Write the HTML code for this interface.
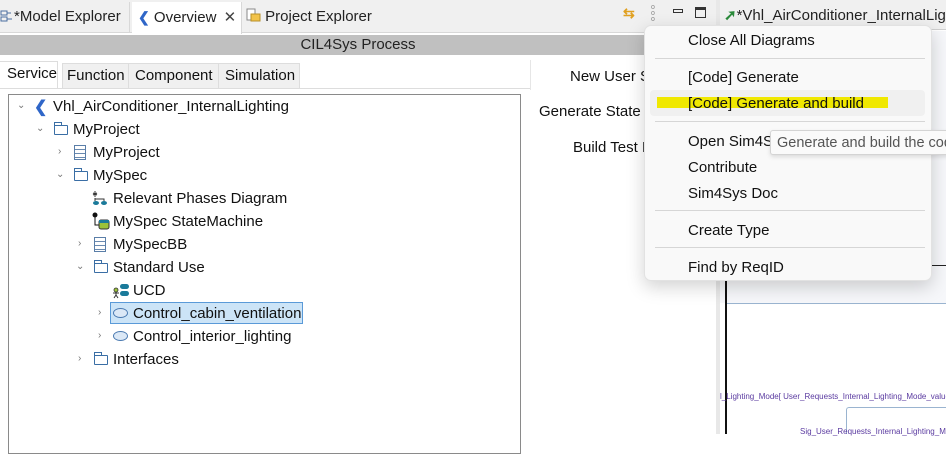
<!DOCTYPE html>
<html><head><meta charset="utf-8">
<style>
*{margin:0;padding:0;box-sizing:border-box}
body{width:946px;height:434px;overflow:hidden;background:#fff;font-family:"Liberation Sans",sans-serif;font-size:14px;color:#111;position:relative}
.a{position:absolute;white-space:nowrap}
.tabbar{left:0;top:0;width:716px;height:33px;background:#f0f0f0;border-bottom:1px solid #d8d8d8}
.tab{top:2px;height:31px;line-height:30px;font-size:15px;color:#222}
.chev{font-size:10px;color:#777}
.fold{width:14px;height:10px;border:1.3px solid #3a6ea5;border-radius:1px;background:#fff}
.fold:before{content:"";position:absolute;left:-1px;top:-4px;width:6px;height:3px;border:1.3px solid #3a6ea5;border-bottom:none}
.bb{width:12px;height:15px;border:1.3px solid #5a7ea8;background:repeating-linear-gradient(#fff 0 3px,#6a8ab0 3px 4px)}
.ell{width:15px;height:10px;border:1.2px solid #4a79b0;border-radius:50%;background:#dbe8f6}
.ti{font-size:15px;color:#111}
.mi{left:688px;font-size:15px;color:#111}
.sep{left:655px;width:270px;height:1px;background:#d6d6d6}
</style></head><body>
<div class="a tabbar"></div>
<div class="a" style="left:0;top:2px;width:130px;height:31px;border-right:1px solid #d8d8d8"></div>
<div class="a tab" style="left:0;">
 <svg width="14" height="14" style="vertical-align:-2px"><rect x="1" y="2" width="6" height="4" fill="none" stroke="#4a6ea0"/><rect x="1" y="8" width="6" height="4" fill="none" stroke="#4a6ea0"/><path d="M7 4h4M7 10h5" stroke="#4a6ea0"/></svg>*Model Explorer</div>
<div class="a" style="left:132px;top:2px;width:110px;height:32px;background:#fff;border-right:1px solid #d8d8d8"></div>
<div class="a tab" style="left:138px;"><span style="color:#2f66c8;font-weight:bold;font-size:14px">❮</span> Overview <span style="color:#444;margin-left:3px">✕</span></div>
<div class="a tab" style="left:246px;"><svg width="15" height="15" style="vertical-align:-2px"><rect x="1" y="1" width="8" height="11" fill="#fff" stroke="#888"/><rect x="5" y="6" width="9" height="7" fill="#f2c34a" stroke="#b8902a"/></svg> Project Explorer</div>
<div class="a" style="left:623px;top:5px;color:#e0a020;font-size:14px;font-weight:bold">⇆</div>
<div class="a" style="left:651px;top:5px;width:5px;font-size:7px;line-height:6px;color:#888">o<br>o<br>o</div>
<div class="a" style="left:673px;top:9px;width:10px;height:4px;border:1.3px solid #333"></div>
<div class="a" style="left:695px;top:7px;width:11px;height:11px;border:1.3px solid #333;border-top-width:3px"></div>
<!-- right editor -->
<div class="a" style="left:716px;top:0;width:230px;height:434px;background:#fff"></div>
<div class="a" style="left:716px;top:0;width:4px;height:434px;background:#e8e8e8"></div>
<div class="a" style="left:720px;top:0;width:226px;height:30px;background:#f0f0f0;border-bottom:1px solid #d0d0d0"></div>
<div class="a tab" style="left:724px;top:1px"><span style="color:#2a8a3a;font-weight:bold">➚</span>*Vhl_AirConditioner_InternalLighting</div>
<div class="a" style="left:720px;top:31px;width:226px;height:272px;background:#f6f7fa"></div>
<div class="a" style="left:725px;top:280px;width:2px;height:154px;background:#111"></div>
<div class="a" style="left:727px;top:303px;width:219px;height:1px;background:#9ab4d0"></div>
<div class="a" style="left:930px;top:265px;width:16px;height:1px;background:#222"></div>
<div class="a" style="left:720px;top:392px;font-size:8px;color:#5a3aa0">l_Lighting_Mode[ User_Requests_Internal_Lighting_Mode_value == Inter</div>
<div class="a" style="left:846px;top:407px;width:100px;height:27px;border:1px solid #9ab4d0;border-right:none;border-bottom:none;border-radius:3px 0 0 0"></div>
<div class="a" style="left:800px;top:427px;font-size:8px;color:#5a3aa0">Sig_User_Requests_Internal_Lighting_Mode[ Us</div>
<!-- header -->
<div class="a" style="left:0;top:35px;width:716px;height:20px;background:#c0c0c0;text-align:center;line-height:20px;font-size:15px;color:#222">CIL4Sys Process</div>
<!-- subtabs -->
<div class="a" style="left:0;top:61px;width:58px;height:28px;background:#fff;border-top:1px solid #ddd;border-right:1px solid #ddd"></div>
<div class="a" style="left:62px;top:63px;width:238px;height:26px;background:#f0f0f0;border:1px solid #ddd"></div>
<div class="a" style="left:128px;top:63px;width:1px;height:26px;background:#ddd"></div>
<div class="a" style="left:218px;top:63px;width:1px;height:26px;background:#ddd"></div>
<div class="a" style="left:0;top:88px;width:530px;height:346px;border-top:1px solid #ddd"></div>
<div class="a" style="left:530px;top:60px;width:1px;height:30px;background:#e6e6e6"></div>
<div class="a ti" style="left:7px;top:65px">Service</div>
<div class="a ti" style="left:67px;top:67px">Function</div>
<div class="a ti" style="left:135px;top:67px">Component</div>
<div class="a ti" style="left:225px;top:67px">Simulation</div>
<!-- tree -->
<div class="a" style="left:8px;top:94px;width:513px;height:360px;border:1px solid #8a8a8a"></div>
<div class="a chev" style="left:17px;top:100px">⌄</div>
<div class="a" style="left:34px;top:97px;color:#2f66c8;font-weight:bold;font-size:16px">❮</div>
<div class="a ti" style="left:53px;top:98px">Vhl_AirConditioner_InternalLighting</div>
<div class="a chev" style="left:36px;top:123px">⌄</div><div class="a fold" style="left:54px;top:125px"></div><div class="a ti" style="left:73px;top:121px">MyProject</div>
<div class="a chev" style="left:58px;top:146px">›</div><div class="a bb" style="left:74px;top:145px"></div><div class="a ti" style="left:93px;top:144px">MyProject</div>
<div class="a chev" style="left:56px;top:169px">⌄</div><div class="a fold" style="left:74px;top:171px"></div><div class="a ti" style="left:93px;top:167px">MySpec</div>
<svg class="a" style="left:92px;top:190px" width="16" height="16"><path d="M3 1v6M1 3l4 2M5 3l-4 2" stroke="#333"/><path d="M3 8v3M3 9h9v2" stroke="#333" fill="none"/><ellipse cx="4" cy="13" rx="3" ry="2" fill="#1a7a9a"/><ellipse cx="12" cy="13" rx="3" ry="2" fill="#1a7a9a"/></svg>
<div class="a ti" style="left:113px;top:190px">Relevant Phases Diagram</div>
<svg class="a" style="left:92px;top:212px" width="18" height="18"><circle cx="3" cy="3" r="2.5" fill="#111"/><path d="M3 5v8h4" stroke="#111" fill="none"/><rect x="7" y="8" width="10" height="9" rx="2" fill="#9bc23a" stroke="#333"/><rect x="7" y="8" width="10" height="3" fill="#1a7a9a"/></svg>
<div class="a ti" style="left:113px;top:213px">MySpec StateMachine</div>
<div class="a chev" style="left:78px;top:238px">›</div><div class="a bb" style="left:94px;top:237px"></div><div class="a ti" style="left:113px;top:236px">MySpecBB</div>
<div class="a chev" style="left:76px;top:261px">⌄</div><div class="a fold" style="left:94px;top:263px"></div><div class="a ti" style="left:113px;top:259px">Standard Use</div>
<svg class="a" style="left:112px;top:282px" width="18" height="18"><circle cx="4" cy="8" r="2" fill="#9bc23a" stroke="#333" stroke-width=".8"/><path d="M4 10v3M1 11h6M4 13l-2 3M4 13l2 3" stroke="#333"/><rect x="8" y="2" width="9" height="5" rx="2.5" fill="#1a7a9a"/><rect x="8" y="9" width="9" height="5" rx="2.5" fill="#1a7a9a"/></svg>
<div class="a ti" style="left:133px;top:282px">UCD</div>
<div class="a" style="left:110px;top:302px;width:193px;height:22px;background:#cce4f7;border:1px solid #5a9ad8"></div>
<div class="a chev" style="left:98px;top:307px">›</div><div class="a ell" style="left:113px;top:308px"></div><div class="a ti" style="left:133px;top:305px">Control_cabin_ventilation</div>
<div class="a chev" style="left:98px;top:330px">›</div><div class="a ell" style="left:113px;top:331px"></div><div class="a ti" style="left:133px;top:328px">Control_interior_lighting</div>
<div class="a chev" style="left:78px;top:353px">›</div><div class="a fold" style="left:94px;top:355px"></div><div class="a ti" style="left:113px;top:351px">Interfaces</div>
<!-- middle labels -->
<div class="a ti" style="left:570px;top:68px">New User S</div>
<div class="a ti" style="left:539px;top:103px">Generate State I</div>
<div class="a ti" style="left:573px;top:139px">Build Test I</div>
<!-- menu -->
<div class="a" style="left:644px;top:25px;width:288px;height:256px;background:#f9f9f9;border:1px solid #e2e2e2;border-radius:7px;box-shadow:0 6px 18px rgba(0,0,0,.18)"></div>
<div class="a mi" style="top:32px">Close All Diagrams</div>
<div class="a sep" style="top:58px"></div>
<div class="a mi" style="top:69px">[Code] Generate</div>
<div class="a" style="left:650px;top:90px;width:275px;height:26px;background:#f0f0f0;border-radius:4px"></div>
<div class="a" style="left:657px;top:97px;width:231px;height:11px;background:#f0e800"></div>
<div class="a mi" style="top:95px">[Code] Generate and build</div>
<div class="a sep" style="top:121px"></div>
<div class="a mi" style="top:133px">Open Sim4Sys</div>
<div class="a mi" style="top:159px">Contribute</div>
<div class="a mi" style="top:185px">Sim4Sys Doc</div>
<div class="a sep" style="top:210px"></div>
<div class="a mi" style="top:222px">Create Type</div>
<div class="a sep" style="top:247px"></div>
<div class="a mi" style="top:259px">Find by ReqID</div>
<!-- tooltip -->
<div class="a" style="left:770px;top:130px;width:190px;height:25px;background:#fafafa;border:1px solid #d4d4d4;border-radius:3px;box-shadow:0 2px 4px rgba(0,0,0,.12);padding-left:6px;line-height:24px;font-size:14.5px;color:#555">Generate and build the code</div>
</body></html>
